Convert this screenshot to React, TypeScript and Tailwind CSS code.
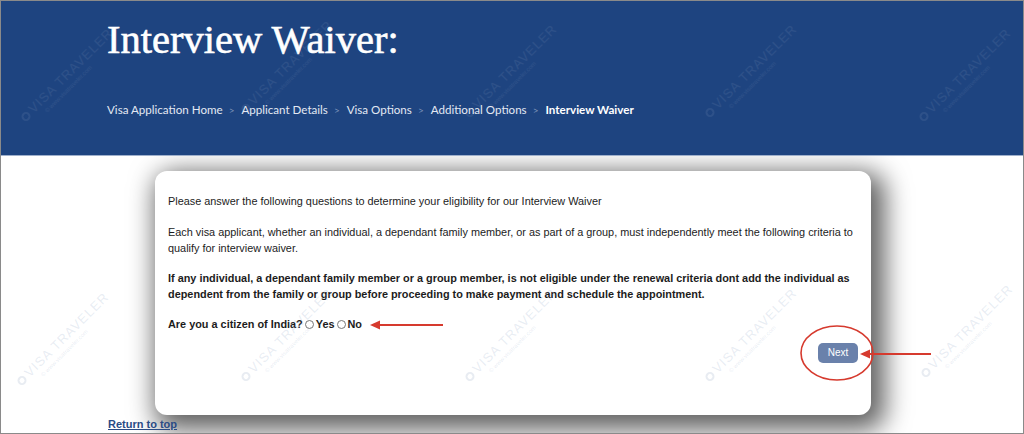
import React from "react";

const crumbs = [
  "Visa Application Home",
  "Applicant Details",
  "Visa Options",
  "Additional Options",
];

// faint "VISA TRAVELER" watermarks laid over the page
const marksTop = [
  "left-[6px] top-[66px]",
  "left-[226px] top-[58px]",
  "left-[450px] top-[62px]",
  "left-[690px] top-[62px]",
  "left-[904px] top-[66px]",
];
const marksBottom = [
  "left-[2px] top-[330px]",
  "left-[226px] top-[326px]",
  "left-[450px] top-[326px]",
  "left-[690px] top-[326px]",
  "left-[906px] top-[322px]",
];

const Watermark = ({ pos, dark }: { pos: string; dark?: boolean }) => (
  <div
    className={`pointer-events-none absolute ${pos} -rotate-45 select-none whitespace-nowrap font-['Liberation_Sans',sans-serif] ${
      dark ? "text-white/[0.07]" : "text-[#8aa0bf]/20"
    }`}
  >
    <div className="flex items-center gap-[3px] text-[13px] leading-[14px] tracking-[1px]">
      <span className="inline-block h-[9px] w-[9px] rounded-full border-[2px] border-current" />
      <span>VISA TRAVELER</span>
    </div>
    <div className="pl-[22px] text-[6px] leading-[8px]">© www.visatraveler.com</div>
  </div>
);

const Radio = () => (
  <span className="mx-[2px] inline-block h-[9px] w-[9px] rounded-full border border-[#777] bg-white align-[-1px]" />
);

export default function App() {
  return (
    <div className="relative flex h-[434px] w-[1024px] flex-col overflow-hidden border border-[#8a8a8a] bg-white font-['Liberation_Sans',Arial,sans-serif]">
      <header className="relative h-[155px] shrink-0 border-b border-[#9fb0cc] bg-[#1e4480] pl-[106px]">
        <h1 className="pt-[19px] font-['Liberation_Serif',serif] text-[40.5px] leading-[40px] text-white [-webkit-text-stroke:0.6px_white]">
          Interview Waiver:
        </h1>
        <nav className="mt-[42px] flex items-center font-['Lato',sans-serif] text-[11.6px] leading-[16px] text-[#e3e9f3]">
          {crumbs.map((c) => (
            <React.Fragment key={c}>
              <span>{c}</span>
              <span className="ml-[6px] mr-[7px] text-[10px] text-[#7d91b8]">&gt;</span>
            </React.Fragment>
          ))}
          <span className="font-bold text-white">Interview Waiver</span>
        </nav>
        {marksTop.map((p) => (
          <Watermark key={p} pos={p} dark />
        ))}
      </header>

      <main className="flex-1">
        <div className="ml-[154px] mt-[15px] flex h-[244px] w-[716px] flex-col rounded-[12px] bg-white pl-[13px] pr-[12px] pt-[22px] text-[10.88px] leading-[16px] text-[#1c1c1c] shadow-[7px_8px_26px_7px_rgba(0,0,0,0.62)]">
          <p className="mb-[15px]">
            Please answer the following questions to determine your eligibility for our Interview Waiver
          </p>
          <p className="mb-[14px]">
            Each visa applicant, whether an individual, a dependant family member, or as part of a group, must
            independently meet the following criteria to qualify for interview waiver.
          </p>
          <p className="mb-[14px] font-bold">
            If any individual, a dependant family member or a group member, is not eligible under the renewal
            criteria dont add the individual as dependent from the family or group before proceeding to make payment
            and schedule the appointment.
          </p>
          <p className="font-bold">
            Are you a citizen of India?
            <Radio />
            Yes
            <Radio />
            No
          </p>
          <div className="mt-[11px] flex justify-end">
            <button className="mr-[1px] h-[20px] w-[40px] rounded-[5px] bg-[#6a81ab] text-[10px] leading-[20px] text-white">
              Next
            </button>
          </div>
        </div>
        <a href="#" className="ml-[107px] mt-[2px] block w-fit text-[11px] font-bold leading-[14px] text-[#2a4b85] underline">
          Return to top
        </a>
      </main>

      {marksBottom.map((p) => (
        <Watermark key={p} pos={p} />
      ))}

      {/* red annotation marks */}
      <svg className="pointer-events-none absolute left-0 top-0" width="1024" height="434">
        <g stroke="#d63a2e" strokeWidth="2" fill="none">
          <line x1="376" y1="324" x2="442" y2="324" />
          <ellipse cx="836" cy="352" rx="36" ry="27" strokeWidth="1.6" />
          <line x1="866" y1="353" x2="930" y2="353" />
        </g>
        <polygon points="369,324 379,319.5 379,328.5" fill="#d63a2e" />
        <polygon points="859,353 869,348.5 869,357.5" fill="#d63a2e" />
      </svg>
    </div>
  );
}
